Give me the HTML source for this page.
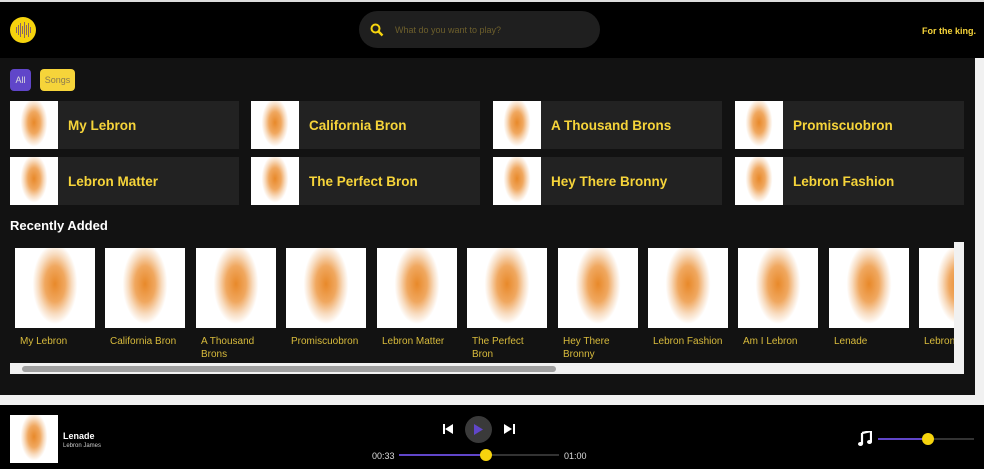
<!DOCTYPE html>
<html><head><style>
*{margin:0;padding:0;box-sizing:border-box}
body{width:984px;height:469px;background:#000;font-family:"Liberation Sans",sans-serif;position:relative;overflow:hidden}
.img{background:radial-gradient(ellipse 28% 50% at 50% 45%,#e8892a 0%,#f0a860 45%,#f8dcc0 75%,#fff 100%),#fff;}
.card{position:absolute;width:229px;height:48px;background:#222;}
.card .img{position:absolute;left:0;top:0;width:48px;height:48px}
.card span{position:absolute;left:58px;top:17px;color:#f6d43a;font-weight:bold;font-size:13.5px}
.tile{position:absolute;top:248px;width:80px}
.tile .img{width:80px;height:80px}
.tile span{display:block;color:#d8bb3c;font-size:10px;margin-top:7px;margin-left:5px;line-height:13px}
</style></head><body>
<div style="position:absolute;left:0;top:0;width:984px;height:2px;background:#ddd"></div>
<div style="position:absolute;left:10px;top:17px;width:26px;height:26px;border-radius:50%;background:#f6d40e;display:flex;align-items:center;justify-content:center;gap:1px">
<i style="width:1px;height:6px;background:#866"></i><i style="width:1px;height:10px;background:#866"></i><i style="width:1px;height:14px;background:#866"></i><i style="width:1px;height:8px;background:#866"></i><i style="width:1px;height:16px;background:#866"></i><i style="width:1px;height:10px;background:#866"></i><i style="width:1px;height:14px;background:#866"></i><i style="width:1px;height:6px;background:#866"></i></div>
<div style="position:absolute;left:359px;top:11px;width:241px;height:37px;border-radius:19px;background:#1f1f1f">
<svg style="position:absolute;left:11px;top:12px" width="14" height="14" viewBox="0 0 14 14"><circle cx="5.5" cy="5.5" r="4" stroke="#f6d40e" stroke-width="2" fill="none"/><line x1="8.5" y1="8.5" x2="12.5" y2="12.5" stroke="#f6d40e" stroke-width="2.4"/></svg>
<span style="position:absolute;left:36px;top:14px;font-size:9px;color:#6d5f2c">What do you want to play?</span></div>
<div style="position:absolute;left:922px;top:26px;font-size:9px;font-weight:bold;color:#f6d43a">For the king.</div>
<div style="position:absolute;left:0;top:58px;width:975px;height:337px;background:#121212"></div>
<div style="position:absolute;left:975px;top:58px;width:9px;height:337px;background:#f1f1f1"></div>
<div style="position:absolute;left:10px;top:69px;width:21px;height:22px;border-radius:4px;background:#6046c9;color:#ddd;font-size:9px;line-height:22px;text-align:center">All</div>
<div style="position:absolute;left:40px;top:69px;width:35px;height:22px;border-radius:4px;background:#f6d43a;color:#8a7a50;font-size:9px;line-height:22px;text-align:center">Songs</div>
<div class="card" style="left:10px;top:101px"><div class="img"></div><span>My Lebron</span></div>
<div class="card" style="left:251px;top:101px"><div class="img"></div><span>California Bron</span></div>
<div class="card" style="left:493px;top:101px"><div class="img"></div><span>A Thousand Brons</span></div>
<div class="card" style="left:735px;top:101px"><div class="img"></div><span>Promiscuobron</span></div>
<div class="card" style="left:10px;top:157px"><div class="img"></div><span>Lebron Matter</span></div>
<div class="card" style="left:251px;top:157px"><div class="img"></div><span>The Perfect Bron</span></div>
<div class="card" style="left:493px;top:157px"><div class="img"></div><span>Hey There Bronny</span></div>
<div class="card" style="left:735px;top:157px"><div class="img"></div><span>Lebron Fashion</span></div>
<div style="position:absolute;left:10px;top:218px;color:#fff;font-weight:bold;font-size:13px">Recently Added</div>
<div style="position:absolute;left:10px;top:242px;width:954px;height:132px;overflow:hidden">
<div class="tile" style="left:5px;top:6px"><div class="img"></div><span>My Lebron</span></div>
<div class="tile" style="left:95px;top:6px"><div class="img"></div><span>California Bron</span></div>
<div class="tile" style="left:186px;top:6px"><div class="img"></div><span>A Thousand Brons</span></div>
<div class="tile" style="left:276px;top:6px"><div class="img"></div><span>Promiscuobron</span></div>
<div class="tile" style="left:367px;top:6px"><div class="img"></div><span>Lebron Matter</span></div>
<div class="tile" style="left:457px;top:6px"><div class="img"></div><span>The Perfect Bron</span></div>
<div class="tile" style="left:548px;top:6px"><div class="img"></div><span>Hey There Bronny</span></div>
<div class="tile" style="left:638px;top:6px"><div class="img"></div><span>Lebron Fashion</span></div>
<div class="tile" style="left:728px;top:6px"><div class="img"></div><span>Am I Lebron</span></div>
<div class="tile" style="left:819px;top:6px"><div class="img"></div><span>Lenade</span></div>
<div class="tile" style="left:909px;top:6px"><div class="img"></div><span>Lebron James</span></div>
<div style="position:absolute;left:944px;top:0;width:10px;height:121px;background:#f1f1f1"></div>
<div style="position:absolute;left:0;top:121px;width:954px;height:11px;background:#f1f1f1"></div>
<div style="position:absolute;left:12px;top:124px;width:534px;height:6px;border-radius:3px;background:#a0a0a0"></div>
</div>
<div style="position:absolute;left:0;top:395px;width:984px;height:10px;background:#f1f1f1"></div>
<div class="img" style="position:absolute;left:10px;top:415px;width:48px;height:48px"></div>
<div style="position:absolute;left:63px;top:431px;color:#fff;font-weight:bold;font-size:9px">Lenade</div>
<div style="position:absolute;left:63px;top:443px;color:#ccc;font-size:6px">Lebron James</div>
<div style="position:absolute;left:443px;top:424px;width:2px;height:10px;background:#fff"></div>
<svg style="position:absolute;left:445px;top:424px" width="9" height="10"><path d="M8 0V10L0 5Z" fill="#fff"/></svg>
<div style="position:absolute;left:465px;top:416px;width:27px;height:27px;border-radius:50%;background:#3a3a3a"></div>
<svg style="position:absolute;left:474px;top:424px" width="10" height="11"><path d="M0 0L9 5.5L0 11Z" fill="#6046c9"/></svg>
<svg style="position:absolute;left:504px;top:424px" width="9" height="10"><path d="M0 0V10L8 5Z" fill="#fff"/></svg>
<div style="position:absolute;left:513px;top:424px;width:2px;height:10px;background:#fff"></div>
<div style="position:absolute;left:372px;top:451px;color:#ddd;font-size:9px">00:33</div>
<div style="position:absolute;left:564px;top:451px;color:#ddd;font-size:9px">01:00</div>
<div style="position:absolute;left:399px;top:454px;width:160px;height:2px;background:#333"></div>
<div style="position:absolute;left:399px;top:454px;width:87px;height:2px;background:#6046c9"></div>
<div style="position:absolute;left:480px;top:449px;width:12px;height:12px;border-radius:50%;background:#f6d40e"></div>
<svg style="position:absolute;left:858px;top:431px" width="14" height="15" viewBox="0 0 14 15"><path d="M4 2L13 0V11" stroke="#fff" stroke-width="2.2" fill="none"/><path d="M4 2V13" stroke="#fff" stroke-width="2.2"/><ellipse cx="2.5" cy="13" rx="2.5" ry="2" fill="#fff"/><ellipse cx="11.5" cy="11" rx="2.5" ry="2" fill="#fff"/></svg>
<div style="position:absolute;left:878px;top:438px;width:96px;height:2px;background:#333"></div>
<div style="position:absolute;left:878px;top:438px;width:50px;height:2px;background:#6046c9"></div>
<div style="position:absolute;left:922px;top:433px;width:12px;height:12px;border-radius:50%;background:#f6d40e"></div>
</body></html>
